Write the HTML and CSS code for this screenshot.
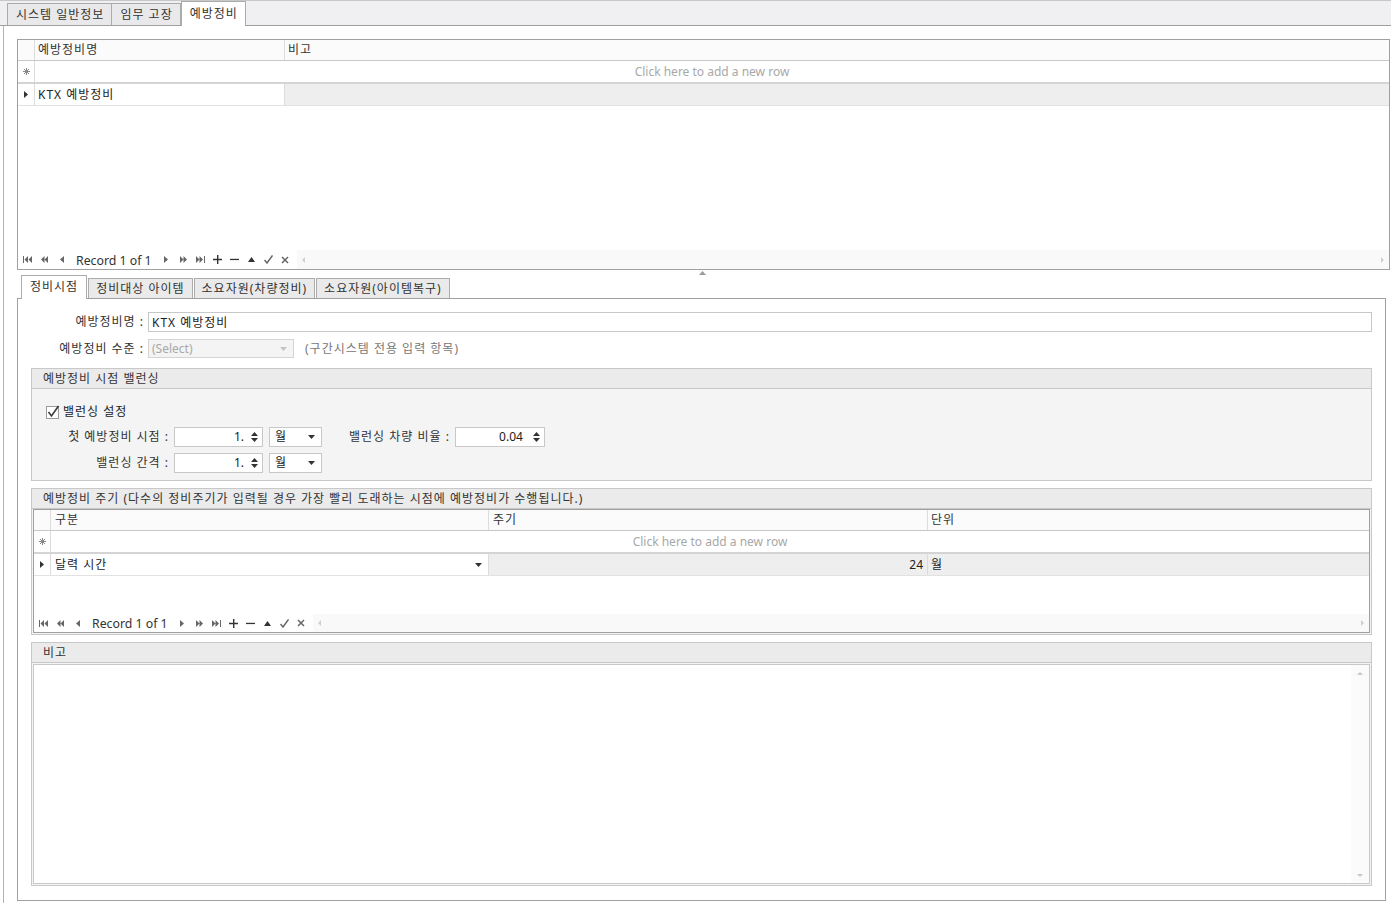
FILE: index.html
```html
<!DOCTYPE html>
<html lang="ko">

<head>
  <meta charset="UTF-8">
  <title>예방정비</title>
  <link rel="stylesheet" href="styles.css">
</head>

<body>
  <!-- 상단 탭 -->
  <div class="tabbar">
    <div class="tab">시스템 일반정보</div>
    <div class="tab">임무 고장</div>
    <div class="tab active">예방정비</div>
  </div>

  <div class="page">
    <!-- 예방정비 목록 그리드 -->
    <div class="grid top-grid">
      <div class="g-head">
        <div class="g-ind"></div>
        <div class="g-cell c-name">예방정비명</div>
        <div class="g-cell c-rest">비고</div>
      </div>
      <div class="g-newrow">
        <div class="g-ind"><svg width="7" height="7" viewBox="0 0 7 7" class="star"><path d="M3.5 0v7M0 3.5h7M1 1l5 5M6 1l-5 5" /></svg></div>
        <div class="g-new">Click here to add a new row</div>
      </div>
      <div class="g-row">
        <div class="g-ind"><svg width="4" height="7" viewBox="0 0 4 7"><path d="M0 0l4 3.5L0 7z" /></svg></div>
        <div class="g-cell c-name focus">KTX 예방정비</div>
        <div class="g-cell c-rest sel"></div>
      </div>
      <div class="g-body"></div>
      <div class="g-nav">
        <div class="nav">
          <span class="nb"><svg width="9" height="7" viewBox="0 0 9 7"><path d="M0 0h1v7H0z M5 0v7L1.5 3.5z M9 0v7L5.5 3.5z" /></svg></span>
          <span class="nb"><svg width="7" height="7" viewBox="0 0 7 7"><path d="M3.5 0v7L0 3.5z M7 0v7L3.5 3.5z" /></svg></span>
          <span class="nb"><svg width="4" height="7" viewBox="0 0 4 7"><path d="M4 0v7L0 3.5z" /></svg></span>
          <span class="rec">Record 1 of 1</span>
          <span class="nb"><svg width="4" height="7" viewBox="0 0 4 7"><path d="M0 0v7L4 3.5z" /></svg></span>
          <span class="nb"><svg width="7" height="7" viewBox="0 0 7 7"><path d="M0 0v7L3.5 3.5z M3.5 0v7L7 3.5z" /></svg></span>
          <span class="nb"><svg width="9" height="7" viewBox="0 0 9 7"><path d="M0 0v7L3.5 3.5z M3.5 0v7L7 3.5z M8 0h1v7H8z" /></svg></span>
          <span class="nb dark"><svg width="9" height="9" viewBox="0 0 9 9"><path d="M4 0h1.4v9H4z M0 3.8h9v1.4H0z" /></svg></span>
          <span class="nb dark"><svg width="9" height="9" viewBox="0 0 9 9"><path d="M0 3.8h9v1.3H0z" /></svg></span>
          <span class="nb dark"><svg width="7" height="5" viewBox="0 0 7 5"><path d="M3.5 0L7 5H0z" /></svg></span>
          <span class="nb check"><svg width="9" height="9" viewBox="0 0 9 9"><path d="M0.5 5l2.5 3L8.5 0.5" /></svg></span>
          <span class="nb check"><svg width="8" height="8" viewBox="0 0 8 8"><path d="M1 1l6 6M7 1l-6 6" /></svg></span>
        </div>
        <div class="hscroll">
          <svg width="3" height="6" viewBox="0 0 3 6"><path d="M3 0v6L0 3z" /></svg>
          <svg width="3" height="6" viewBox="0 0 3 6"><path d="M0 0v6L3 3z" /></svg>
        </div>
      </div>
    </div>

    <!-- 스플리터 -->
    <div class="splitter"><svg width="7" height="4" viewBox="0 0 7 4"><path d="M3.5 0L7 4H0z" /></svg></div>

    <!-- 하단 탭 -->
    <div class="subtabs">
      <div class="stab active">정비시점</div>
      <div class="stab">정비대상 아이템</div>
      <div class="stab">소요자원(차량정비)</div>
      <div class="stab">소요자원(아이템복구)</div>
    </div>

    <div class="tab-page">
      <div class="frow">
        <label class="flabel">예방정비명 :</label>
        <div class="edit wide">KTX 예방정비</div>
      </div>
      <div class="frow r2">
        <label class="flabel">예방정비 수준 :</label>
        <div class="combo disabled">(Select)<svg width="7" height="4" viewBox="0 0 7 4"><path d="M0 0h7L3.5 4z" /></svg></div>
        <span class="note">(구간시스템 전용 입력 항목)</span>
      </div>

      <!-- 밸런싱 -->
      <div class="group g-balance">
        <div class="group-head">예방정비 시점 밸런싱</div>
        <div class="group-body pad">
          <div class="chk">
            <svg width="14" height="14" viewBox="0 0 14 14"><rect x="0.5" y="1.5" width="12" height="12" fill="#fff" stroke="#9a9a9a" /><path d="M2.5 7l3 4L12.5 1" fill="none" stroke="#3a3a3a" stroke-width="1.6" /></svg>
            <span>밸런싱 설정</span>
          </div>
          <div class="brow">
            <label class="blabel">첫 예방정비 시점 :</label>
            <div class="spin"><span>1.</span><svg width="7" height="12" viewBox="0 0 7 12"><path d="M3.5 1L7 5H0z M0 7h7L3.5 11z" /></svg></div>
            <div class="combo unit">월<svg width="7" height="4" viewBox="0 0 7 4"><path d="M0 0h7L3.5 4z" /></svg></div>
            <label class="blabel2">밸런싱 차량 비율 :</label>
            <div class="spin ratio"><span>0.04</span><svg width="7" height="12" viewBox="0 0 7 12"><path d="M3.5 1L7 5H0z M0 7h7L3.5 11z" /></svg></div>
          </div>
          <div class="brow">
            <label class="blabel">밸런싱 간격 :</label>
            <div class="spin"><span>1.</span><svg width="7" height="12" viewBox="0 0 7 12"><path d="M3.5 1L7 5H0z M0 7h7L3.5 11z" /></svg></div>
            <div class="combo unit">월<svg width="7" height="4" viewBox="0 0 7 4"><path d="M0 0h7L3.5 4z" /></svg></div>
          </div>
        </div>
      </div>

      <!-- 주기 -->
      <div class="group g-cycle">
        <div class="group-head">예방정비 주기 (다수의 정비주기가 입력될 경우 가장 빨리 도래하는 시점에 예방정비가 수행됩니다.)</div>
        <div class="group-body thin">
          <div class="grid cycle-grid">
            <div class="g-head">
              <div class="g-ind"></div>
              <div class="g-cell c-kind">구분</div>
              <div class="g-cell c-period">주기</div>
              <div class="g-cell c-rest">단위</div>
            </div>
            <div class="g-newrow">
              <div class="g-ind"><svg width="7" height="7" viewBox="0 0 7 7" class="star"><path d="M3.5 0v7M0 3.5h7M1 1l5 5M6 1l-5 5" /></svg></div>
              <div class="g-new">Click here to add a new row</div>
            </div>
            <div class="g-row">
              <div class="g-ind"><svg width="4" height="7" viewBox="0 0 4 7"><path d="M0 0l4 3.5L0 7z" /></svg></div>
              <div class="g-cell c-kind focus drop">달력 시간<svg width="7" height="4" viewBox="0 0 7 4"><path d="M0 0h7L3.5 4z" /></svg></div>
              <div class="g-cell c-period sel num">24</div>
              <div class="g-cell c-rest sel">월</div>
            </div>
            <div class="g-body"></div>
            <div class="g-nav">
              <div class="nav">
                <span class="nb"><svg width="9" height="7" viewBox="0 0 9 7"><path d="M0 0h1v7H0z M5 0v7L1.5 3.5z M9 0v7L5.5 3.5z" /></svg></span>
                <span class="nb"><svg width="7" height="7" viewBox="0 0 7 7"><path d="M3.5 0v7L0 3.5z M7 0v7L3.5 3.5z" /></svg></span>
                <span class="nb"><svg width="4" height="7" viewBox="0 0 4 7"><path d="M4 0v7L0 3.5z" /></svg></span>
                <span class="rec">Record 1 of 1</span>
                <span class="nb"><svg width="4" height="7" viewBox="0 0 4 7"><path d="M0 0v7L4 3.5z" /></svg></span>
                <span class="nb"><svg width="7" height="7" viewBox="0 0 7 7"><path d="M0 0v7L3.5 3.5z M3.5 0v7L7 3.5z" /></svg></span>
                <span class="nb"><svg width="9" height="7" viewBox="0 0 9 7"><path d="M0 0v7L3.5 3.5z M3.5 0v7L7 3.5z M8 0h1v7H8z" /></svg></span>
                <span class="nb dark"><svg width="9" height="9" viewBox="0 0 9 9"><path d="M4 0h1.4v9H4z M0 3.8h9v1.4H0z" /></svg></span>
                <span class="nb dark"><svg width="9" height="9" viewBox="0 0 9 9"><path d="M0 3.8h9v1.3H0z" /></svg></span>
                <span class="nb dark"><svg width="7" height="5" viewBox="0 0 7 5"><path d="M3.5 0L7 5H0z" /></svg></span>
                <span class="nb check"><svg width="9" height="9" viewBox="0 0 9 9"><path d="M0.5 5l2.5 3L8.5 0.5" /></svg></span>
                <span class="nb check"><svg width="8" height="8" viewBox="0 0 8 8"><path d="M1 1l6 6M7 1l-6 6" /></svg></span>
              </div>
              <div class="hscroll">
                <svg width="3" height="6" viewBox="0 0 3 6"><path d="M3 0v6L0 3z" /></svg>
                <svg width="3" height="6" viewBox="0 0 3 6"><path d="M0 0v6L3 3z" /></svg>
              </div>
            </div>
          </div>
        </div>
      </div>

      <!-- 비고 -->
      <div class="group g-memo">
        <div class="group-head">비고</div>
        <div class="group-body thin">
          <div class="memo">
            <div class="vscroll">
              <svg width="6" height="3" viewBox="0 0 6 3"><path d="M3 0l3 3H0z" /></svg>
              <svg width="6" height="3" viewBox="0 0 6 3"><path d="M0 0h6L3 3z" /></svg>
            </div>
          </div>
        </div>
      </div>
    </div>
  </div>
</body>

</html>
```

FILE: styles.css
```css
* {
  margin: 0;
  padding: 0;
  box-sizing: border-box;
}

:root {
  --line: #a0a0a0;
  --line-light: #c8c8c8;
  --cell-line: #dcdcdc;
  --sel-bg: #eeeeee;
  --group-bg: #f4f4f4;
  --group-head: #ebebeb;
  --text: #222;
}

body {
  width: 1391px;
  height: 903px;
  overflow: hidden;
  background: #fff;
  color: var(--text);
  font: 12px/1 "Noto Sans", "Noto Sans CJK KR", sans-serif;
  /** 한글 글자폭 맞춤 */
  letter-spacing: 1px;
}

/** 영문/숫자는 자간 없음 */
.rec,
.g-new,
.num,
.spin span,
.combo.disabled {
  letter-spacing: 0;
}

/** 상단 탭 */
.tabbar {
  height: 26px;
  display: flex;
  align-items: flex-end;
  padding-left: 7px;
  background: #f0f0f2;
  border-top: 1px solid var(--line-light);
  border-bottom: 1px solid var(--line);
}

.tab {
  height: 22px;
  padding: 0 7px 0 8px;
  line-height: 21px;
  margin-right: -1px;
  color: #333;
  background: #e9e9eb;
  border: 1px solid #ababab;
  border-bottom: none;
}

.tab.active {
  position: relative;
  height: 25px;
  margin-bottom: -1px;
  margin-left: 1px;
  line-height: 23px;
  background: #fff;
  z-index: 1;
}

.page {
  height: 877px;
  margin-left: 3px;
  padding: 13px 0 0 13px;
  display: flex;
  flex-direction: column;
  border-left: 1px solid #b4b4b4;
}

/** 그리드 */
.grid {
  display: flex;
  flex-direction: column;
  background: #fff;
  border: 1px solid var(--line);
}

.top-grid {
  height: 231px;
  margin-right: 1px;
}

.g-head,
.g-newrow,
.g-row {
  display: flex;
  flex-shrink: 0;
}

.g-head {
  height: 21px;
  background: #fbfbfb;
  border-bottom: 1px solid var(--line-light);
}

.g-newrow {
  height: 23px;
  border-bottom: 2px solid #d4d4d4;
}

.g-row {
  height: 22px;
  border-bottom: 1px solid #e2e2e2;
}

.g-ind {
  width: 17px;
  flex-shrink: 0;
  display: flex;
  align-items: center;
  justify-content: center;
  border-right: 1px solid var(--cell-line);
  fill: #333;
}

.g-ind .star {
  fill: none;
  stroke: #888;
  stroke-width: 1;
}

.g-cell {
  padding: 0 3px;
  line-height: 20px;
  white-space: nowrap;
  border-right: 1px solid var(--cell-line);
}

.g-head .g-cell {
  color: #333;
}

.c-name {
  width: 250px;
}

.c-rest {
  flex: 1;
  border-right: none;
}

.c-kind {
  width: 438px;
  padding-left: 4px;
}

.c-period {
  width: 439px;
  padding-left: 4px;
}

.c-rest {
  padding-left: 3px;
}

.g-row .g-cell {
  line-height: 22px;
}

.sel {
  background: var(--sel-bg);
}

.num {
  text-align: right;
  padding-right: 4px;
}

.drop {
  display: flex;
  align-items: center;
  justify-content: space-between;
  padding-right: 6px;
  fill: #333;
}

.g-new {
  flex: 1;
  text-align: center;
  line-height: 21px;
  color: #a8a8a8;
}

.g-body {
  flex: 1;
}

.g-nav {
  height: 19px;
  display: flex;
  flex-shrink: 0;
}

.nav {
  display: flex;
  align-items: center;
  padding-left: 1px;
  color: #333;
}

.nb {
  width: 17px;
  height: 19px;
  display: flex;
  align-items: center;
  justify-content: center;
  fill: #666;
}

.nb.dark {
  fill: #333;
}

.nb.check {
  fill: none;
  stroke: #666;
  stroke-width: 1.5;
}

.rec {
  padding: 1px 6px 0 6px;
  line-height: 19px;
  white-space: nowrap;
  font-size: 12.3px;
}

.hscroll {
  flex: 1;
  margin-left: 3px;
  display: flex;
  align-items: center;
  justify-content: space-between;
  padding: 0 5px;
  background: #f9f9f9;
  fill: #d0d0d0;
}

.splitter {
  height: 5px;
  display: flex;
  justify-content: center;
  fill: #9a9a9a;
}

.splitter svg {
  margin-top: 1px;
  margin-left: -4px;
}

/** 하단 탭 */
.subtabs {
  height: 23px;
  display: flex;
  align-items: flex-end;
  padding-left: 4px;
}

.stab {
  height: 20px;
  padding: 0 7px;
  line-height: 19px;
  margin-right: 1px;
  color: #333;
  background: #eaeaea;
  border: 1px solid #acacac;
  border-bottom: none;
}

.stab.active {
  position: relative;
  height: 24px;
  padding: 0 8px;
  margin-bottom: -1px;
  line-height: 22px;
  background: #fff;
  z-index: 1;
}

.tab-page {
  height: 603px;
  margin-right: 5px;
  padding: 13px 13px 14px 13px;
  display: flex;
  flex-direction: column;
  border: 1px solid var(--line);
}

.frow {
  height: 20px;
  display: flex;
  align-items: center;
  flex-shrink: 0;
}

.frow.r2 {
  height: 19px;
  margin-top: 7px;
}

.flabel {
  width: 114px;
  padding-right: 1px;
  text-align: right;
  color: #333;
}

.edit {
  height: 20px;
  margin-left: 3px;
  padding: 0 3px;
  line-height: 19px;
  background: #fff;
  border: 1px solid var(--line-light);
}

.edit.wide {
  flex: 1;
}

.combo {
  height: 20px;
  padding: 0 6px 0 5px;
  display: flex;
  align-items: center;
  justify-content: space-between;
  background: #fff;
  border: 1px solid var(--line-light);
  fill: #333;
}

.combo.disabled {
  width: 146px;
  height: 19px;
  margin-left: 3px;
  padding-left: 3px;
  color: #a8a8a8;
  background: #f4f4f4;
  border-color: #d4d4d4;
  fill: #c4c4c4;
}

.note {
  margin-left: 11px;
  color: #777;
}

/** 그룹 박스 */
.group {
  display: flex;
  flex-direction: column;
  flex-shrink: 0;
  background: var(--group-bg);
  border: 1px solid var(--line-light);
}

.group-head {
  height: 20px;
  padding-left: 11px;
  line-height: 19px;
  color: #333;
  background: var(--group-head);
  border-bottom: 1px solid var(--line-light);
}

.g-balance {
  height: 113px;
  margin-top: 10px;
}

.group-body.pad {
  padding: 14px 0 0 14px;
}

.chk {
  height: 17px;
  display: flex;
  align-items: center;
  gap: 3px;
}

.brow {
  height: 20px;
  display: flex;
  align-items: center;
  margin-top: 7px;
  margin-left: -14px;
}

.brow+.brow {
  margin-top: 6px;
}

.blabel {
  width: 137px;
  text-align: right;
  color: #333;
}

.spin {
  width: 89px;
  height: 20px;
  margin-left: 5px;
  display: flex;
  align-items: center;
  justify-content: flex-end;
  gap: 7px;
  padding-right: 4px;
  background: #fff;
  border: 1px solid var(--line-light);
  fill: #333;
}

.spin.ratio {
  width: 90px;
  gap: 10px;
  margin-left: 5px;
}

.unit {
  width: 53px;
  margin-left: 6px;
}

.blabel2 {
  margin-left: 27px;
  color: #333;
}

.g-cycle {
  height: 147px;
  margin-top: 7px;
}

.group-body.thin {
  flex: 1;
  display: flex;
  flex-direction: column;
  padding: 0 1px 1px;
}

.cycle-grid {
  flex: 1;
}

.cycle-grid .g-head {
  height: 21px;
}

.cycle-grid .g-newrow {
  height: 23px;
}

.cycle-grid .g-nav {
  height: 18px;
}

.g-memo {
  flex: 1;
  margin-top: 7px;
}

.group-body.thin .memo {
  flex: 1;
  margin-top: 1px;
  display: flex;
  justify-content: flex-end;
  background: #fff;
  border: 1px solid var(--line-light);
}

.vscroll {
  width: 18px;
  display: flex;
  flex-direction: column;
  align-items: center;
  justify-content: space-between;
  padding: 7px 0 6px;
  background: #fbfbfb;
  fill: #c8c8c8;
}
```
